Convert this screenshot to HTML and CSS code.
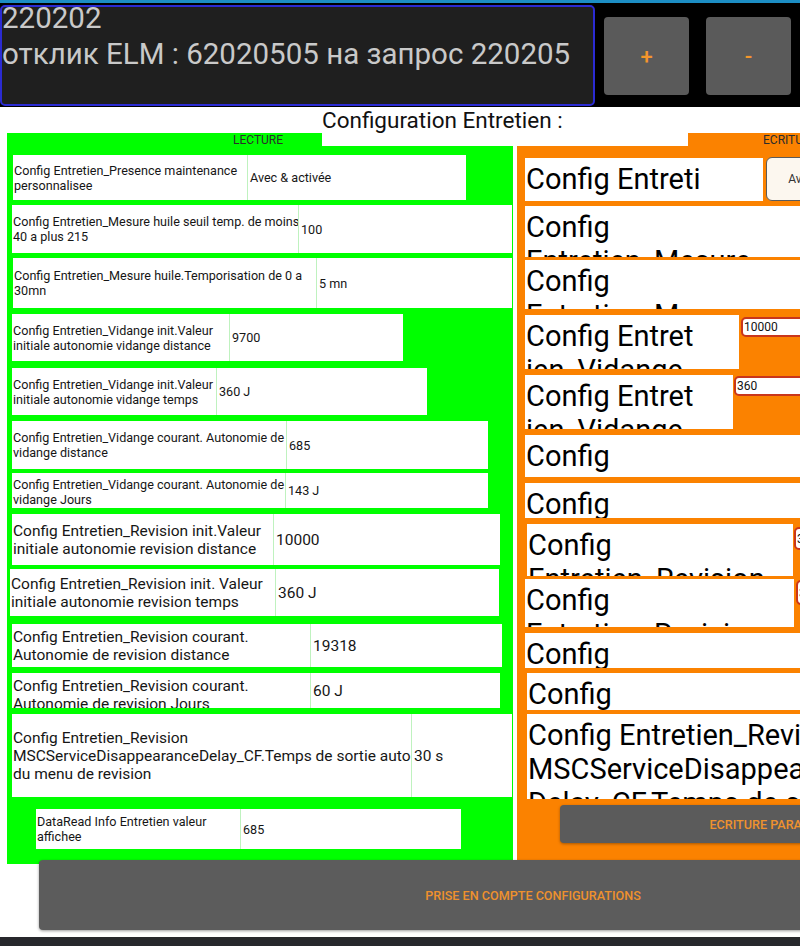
FILE: index.html
```html
<!DOCTYPE html>
<html lang="fr">
<head>
    <meta charset="UTF-8">
    <title>Configuration Entretien</title>

    <link rel="stylesheet" href="styles.css">
</head>
<body>

    <div class="status-strip"></div>

    <header class="topbar">
        <div class="readout">
            <div class="readout-text">220202<br>отклик ELM : 62020505 на запрос 220205</div>
        </div>
        <button class="step-btn">+</button>
        <button class="step-btn minus">-</button>
    </header>

    <h1 class="page-title">Configuration Entretien :</h1>

    <div class="panels">

        <!-- values read from the ECU -->
        <section class="panel read">
            <div class="tab">LECTURE</div>
            <div class="panel-body">
                <div class="row presence">
                    <div class="label"><span>Config Entretien_Presence maintenance<br>personnalisee</span></div>
                    <div class="value">Avec &amp; activée</div>
                </div>
                <div class="row oil-threshold">
                    <div class="label"><span>Config Entretien_Mesure huile seuil temp. de moins<br>40 a plus 215</span></div>
                    <div class="value">100</div>
                </div>
                <div class="row oil-delay">
                    <div class="label"><span>Config Entretien_Mesure huile.Temporisation de 0 a<br>30mn</span></div>
                    <div class="value">5 mn</div>
                </div>
                <div class="row drain-dist">
                    <div class="label"><span>Config Entretien_Vidange init.Valeur<br>initiale autonomie vidange distance</span></div>
                    <div class="value">9700</div>
                </div>
                <div class="row drain-time">
                    <div class="label"><span>Config Entretien_Vidange init.Valeur<br>initiale autonomie vidange temps</span></div>
                    <div class="value">360 J</div>
                </div>
                <div class="row drain-left-dist">
                    <div class="label"><span>Config Entretien_Vidange courant. Autonomie de<br>vidange distance</span></div>
                    <div class="value">685</div>
                </div>
                <div class="row drain-left-days">
                    <div class="label"><span>Config Entretien_Vidange courant. Autonomie de<br>vidange Jours</span></div>
                    <div class="value">143 J</div>
                </div>
                <div class="row big rev-dist">
                    <div class="label"><span>Config Entretien_Revision init.Valeur<br>initiale autonomie revision distance</span></div>
                    <div class="value">10000</div>
                </div>
                <div class="row big rev-time">
                    <div class="label"><span>Config Entretien_Revision init. Valeur<br>initiale autonomie revision temps</span></div>
                    <div class="value">360 J</div>
                </div>
                <div class="row big rev-left-dist">
                    <div class="label"><span>Config Entretien_Revision courant.<br>Autonomie de revision distance</span></div>
                    <div class="value">19318</div>
                </div>
                <div class="row big rev-left-days">
                    <div class="label"><span>Config Entretien_Revision courant.<br>Autonomie de revision Jours</span></div>
                    <div class="value">60 J</div>
                </div>
                <div class="row big rev-exit">
                    <div class="label"><span>Config Entretien_Revision<br>MSCServiceDisappearanceDelay_CF.Temps de sortie auto<br>du menu de revision</span></div>
                    <div class="value">30 s</div>
                </div>
                <div class="row shown-value">
                    <div class="label"><span>DataRead Info Entretien valeur<br>affichee</span></div>
                    <div class="value">685</div>
                </div>
            </div>
        </section>

        <!-- values to write back -->
        <section class="panel write">
            <div class="tab">ECRITURE</div>
            <div class="panel-body">
                <div class="wrow w-presence">
                    <div class="wlabel"><div class="wtext">Config Entreti<br>en_Presence maintenance personnalisee</div></div>
                    <button class="choice">Avec &amp; activée</button>
                </div>
                <div class="wrow w-oil-threshold">
                    <div class="wlabel"><div class="wtext">Config Entretien_Mesure huile seuil temp. de moins 40 a plus 215</div></div>
                </div>
                <div class="wrow w-oil-delay">
                    <div class="wlabel"><div class="wtext">Config Entretien_Mesure huile.Temporisation de 0 a 30mn</div></div>
                </div>
                <div class="wrow w-drain-dist">
                    <div class="wlabel"><div class="wtext">Config Entret<br>ien_Vidange init.Valeur initiale autonomie vidange distance</div></div>
                    <input class="field" type="text" value="10000">
                </div>
                <div class="wrow w-drain-time">
                    <div class="wlabel"><div class="wtext">Config Entret<br>ien_Vidange init.Valeur initiale autonomie vidange temps</div></div>
                    <input class="field" type="text" value="360">
                </div>
                <div class="wrow w-drain-left-dist">
                    <div class="wlabel"><div class="wtext">Config Entretien_Vidange courant. Autonomie de vidange distance</div></div>
                </div>
                <div class="wrow w-drain-left-days">
                    <div class="wlabel"><div class="wtext">Config Entretien_Vidange courant. Autonomie de vidange Jours</div></div>
                </div>
                <div class="wrow w-rev-dist">
                    <div class="wlabel"><div class="wtext">Config Entretien_Revision init.Valeur initiale autonomie revision distance</div></div>
                    <input class="field" type="text" value="30000">
                </div>
                <div class="wrow w-rev-time">
                    <div class="wlabel"><div class="wtext">Config Entretien_Revision init. Valeur initiale autonomie revision temps</div></div>
                    <input class="field" type="text" value="365">
                </div>
                <div class="wrow w-rev-left-dist">
                    <div class="wlabel"><div class="wtext">Config Entretien_Revision courant. Autonomie de revision distance</div></div>
                </div>
                <div class="wrow w-rev-left-days">
                    <div class="wlabel"><div class="wtext">Config Entretien_Revision courant. Autonomie de revision Jours</div></div>
                </div>
                <div class="wrow w-rev-exit">
                    <div class="wlabel"><div class="wtext">Config Entretien_Revision MSCServiceDisappearanceDelay_CF.Temps de sortie auto du menu de revision</div></div>
                </div>
                <button class="write-btn">ECRITURE PARAMETRES</button>
            </div>
        </section>

    </div>

    <button class="apply-btn">PRISE EN COMPTE CONFIGURATIONS</button>

    <div class="nav-bar"></div>

</body>
</html>
```

FILE: styles.css
```css
html, body{
    height:100%;
}

body{
    margin: 0;
    width: 800px;
    height: 946px;
    overflow: hidden;
    background: white;
    font-family: Roboto, "Noto Sans", sans-serif;
    color: #161616;
}

button, input{
    font-family: inherit;
}

.status-strip{
    height: 3px;
    background: #1c8ec4;
}

/* black header with the ELM readout and the two step buttons */
.topbar{
    display: flex;
    align-items: flex-start;
    height: 104px;
    background: black;
}

.readout{
    box-sizing: border-box;
    width: 595px;
    height: 101px;
    margin-top: 2px;
    border: 2px solid #2b2bd2;
    border-radius: 5px;
    background: #1f1f1f;
    color: #c9c9c9;
    font-size: 29.5px;
    line-height: 36px;
    overflow: hidden;
    white-space: nowrap;
}

.readout-text{
    margin-top: -7px;
}

.step-btn{
    width: 85px;
    height: 78px;
    margin: 14px 0 0 9px;
    border: 0;
    border-radius: 4px;
    background: #5a5a5a;
    color: #f3962c;
    font-size: 22px;
    font-weight: 500;
}

.step-btn.minus{
    margin-left: 17px;
}

.page-title{
    margin: 0;
    height: 26px;
    padding-left: 322px;
    font-size: 22.5px;
    font-weight: 400;
    line-height: 26px;
    color: #111;
}

.panels{
    display: flex;
    gap: 4px;
    height: 731px;
    padding-left: 7px;
}

.panel{
    display: flex;
    flex-direction: column;
    flex-shrink: 0;
}

.panel.read{
    width: 506px;
}

.panel.write{
    width: 493px;
}

.tab{
    height: 13px;
    font-size: 12px;
    line-height: 15px;
    color: #2c2c2c;
}

.read .tab{
    width: 315px;
    padding-left: 226px;
    box-sizing: border-box;
    background: #00ff00;
}

.write .tab{
    margin-left: 171px;
    padding-left: 75px;
    background: #fb8200;
}

.panel-body{
    flex: 1;
    display: flex;
    flex-direction: column;
    align-items: flex-start;
}

.read .panel-body{
    background: #00ff00;
}

.write .panel-body{
    background: #fb8200;
}

/* LECTURE rows: caption cell + value cell */
.row{
    display: flex;
    flex-shrink: 0;
    box-sizing: border-box;
    width: var(--w);
    height: var(--h);
    margin: var(--mt) 0 0 var(--ml);
    background: white;
    font-size: 12.6px;
    line-height: 15px;
}

.row.big{
    font-size: 15.5px;
    line-height: 18px;
}

.row .label{
    display: flex;
    flex-direction: column;
    box-sizing: border-box;
    width: var(--lw);
    padding: 4px 0 4px 1px;
    overflow: hidden;
    white-space: nowrap;
}

.row .label span{
    margin: auto 0;
}

.row .value{
    flex: 1;
    display: flex;
    align-items: center;
    padding-left: 2px;
    border-left: 1px solid #bff2bf;
}

.presence{ --mt: 9px; --ml: 6px; --w: 453px; --h: 45px; --lw: 234px; }
.oil-threshold{ --mt: 5px; --ml: 5px; --w: 500px; --h: 48px; --lw: 286px; }
.oil-delay{ --mt: 5px; --ml: 6px; --w: 499px; --h: 50px; --lw: 303px; }
.drain-dist{ --mt: 6px; --ml: 5px; --w: 391px; --h: 47px; --lw: 217px; }
.drain-time{ --mt: 7px; --ml: 5px; --w: 415px; --h: 47px; --lw: 204px; }
.drain-left-dist{ --mt: 6px; --ml: 5px; --w: 476px; --h: 48px; --lw: 274px; }
.drain-left-days{ --mt: 4px; --ml: 5px; --w: 476px; --h: 35px; --lw: 273px; }
.rev-dist{ --mt: 6px; --ml: 5px; --w: 488px; --h: 51px; --lw: 261px; }
.rev-time{ --mt: 4px; --ml: 3px; --w: 489px; --h: 47px; --lw: 265px; }
.rev-left-dist{ --mt: 8px; --ml: 5px; --w: 490px; --h: 43px; --lw: 298px; }
.rev-left-days{ --mt: 6px; --ml: 5px; --w: 488px; --h: 35px; --lw: 298px; }
.rev-exit{ --mt: 6px; --ml: 5px; --w: 500px; --h: 83px; --lw: 399px; }
.shown-value{ --mt: 12px; --ml: 29px; --w: 425px; --h: 40px; --lw: 204px; }

/* ECRITURE rows: big caption, optional edit field */
.wrow{
    display: flex;
    align-items: flex-start;
    flex-shrink: 0;
    height: var(--h);
    margin: var(--mt) 0 0 var(--ml);
}

.wlabel{
    box-sizing: border-box;
    width: var(--bw, 470px);
    height: var(--h);
    padding: 4px 0 0 1px;
    background: white;
    overflow: hidden;
    font-size: 29px;
    line-height: 34px;
    color: black;
}

.wtext{
    width: var(--tw, 270px);
    overflow-wrap: anywhere;
}

.w-presence{ --mt: 11px; --ml: 8px; --h: 44px; }
.w-presence .wlabel{ --bw: 238px; --tw: 236px; height: 43px; margin-top: 1px; }
.w-oil-threshold{ --mt: 5px; --ml: 8px; --h: 51px; }
.w-oil-delay{ --mt: 3px; --ml: 8px; --h: 49px; }
.w-drain-dist{ --mt: 6px; --ml: 8px; --h: 54px; --bw: 214px; --tw: 212px; }
.w-drain-time{ --mt: 6px; --ml: 8px; --h: 54px; --bw: 208px; --tw: 206px; }
.w-drain-left-dist{ --mt: 6px; --ml: 8px; --h: 42px; }
.w-drain-left-days{ --mt: 6px; --ml: 8px; --h: 35px; }
.w-rev-dist{ --mt: 6px; --ml: 10px; --h: 52px; --bw: 266px; }
.w-rev-time{ --mt: 3px; --ml: 8px; --h: 48px; --bw: 269px; }
.w-rev-left-dist{ --mt: 6px; --ml: 8px; --h: 35px; }
.w-rev-left-days{ --mt: 5px; --ml: 10px; --h: 37px; }
.w-rev-exit{ --mt: 4px; --ml: 10px; --h: 85px; --tw: 355px; }

.choice{
    width: 122px;
    height: 44px;
    margin-left: 3px;
    border: 1.5px solid #5b5b5b;
    border-radius: 6px;
    background: #fcf7ef;
    color: #333;
    font-size: 12px;
}

.field{
    box-sizing: border-box;
    width: 80px;
    height: 20px;
    padding: 0 0 0 1px;
    border: 2px solid #c9361c;
    border-radius: 5px;
    background: white;
    color: #111;
    font-size: 12px;
    outline: none;
}

.w-drain-dist .field{ margin: 2px 0 0 2px; }
.w-drain-time .field{ margin: 1px 0 0 1px; }
.w-rev-dist .field{ margin: 3px 0 0 1px; height: 23px; }
.w-rev-time .field{ margin: 1px 0 0 2px; height: 25px; }

.write-btn{
    flex-shrink: 0;
    width: 440px;
    height: 38px;
    margin: 6px 0 0 43px;
    border: 0;
    border-radius: 4px;
    background: #5b5b5b;
    box-shadow: 0 1px 3px rgba(0, 0, 0, 0.35);
    color: #ee922e;
    font-size: 12.6px;
    font-weight: 500;
}

.apply-btn{
    position: relative;
    display: block;
    width: 988px;
    height: 70px;
    margin: -4px 0 0 39px;
    border: 0;
    border-radius: 4px;
    background: #5c5c5c;
    box-shadow: 0 1px 3px rgba(0, 0, 0, 0.4);
    color: #ee912d;
    font-size: 12.6px;
    font-weight: 500;
}

.nav-bar{
    height: 9px;
    margin-top: 7px;
    background: #27282c;
}
```
